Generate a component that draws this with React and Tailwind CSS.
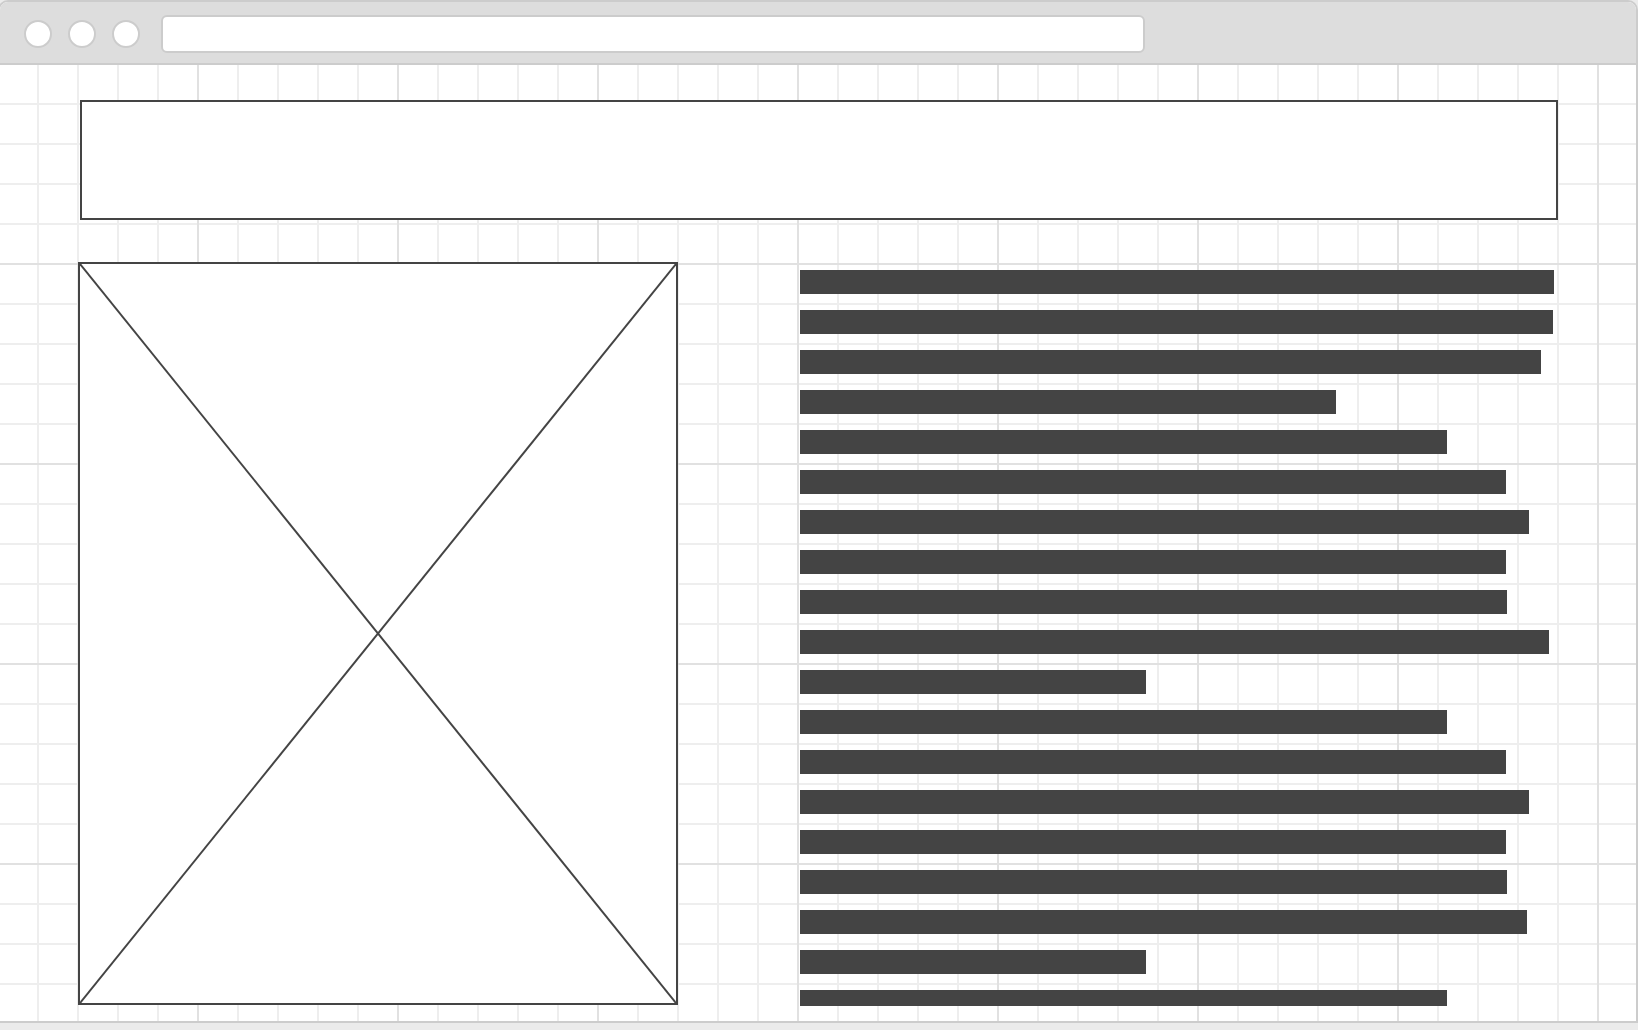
import React from "react";

const bars = [754, 753, 741, 536, 647, 706, 729, 706, 707, 749, 346, 647, 706, 729, 706, 707, 727, 346, 647];

function Dot() {
  return <div className="w-[28px] h-[28px] rounded-full bg-white border-2 border-[#cccccc]" />;
}

export default function App() {
  return (
    <div className="w-[1638px] h-[1030px] bg-[#ebebeb] overflow-hidden">
      <div className="ml-[-2px] w-[1640px] h-[1023px] border-2 border-[#cccccc] rounded-t-[10px] overflow-hidden bg-white flex flex-col">
        <div className="h-[63px] bg-[#dddddd] border-b-2 border-[#cccccc] flex items-start shrink-0">
          <div className="flex gap-[16px] ml-[24px] mt-[18px]">
            <Dot />
            <Dot />
            <Dot />
          </div>
          <div className="ml-[21px] mt-[13px] w-[984px] h-[38px] bg-white border-2 border-[#cccccc] rounded-[6px]" />
        </div>
        <div className="flex-1 pt-[35px] [background-image:linear-gradient(to_right,#e1e1e1_2px,transparent_2px),linear-gradient(to_bottom,#e1e1e1_2px,transparent_2px),linear-gradient(to_right,#eeeeee_2px,transparent_2px),linear-gradient(to_bottom,#eeeeee_2px,transparent_2px)] [background-size:200px_200px,200px_200px,40px_40px,40px_40px] [background-position:197px_0,0_198px,37px_0,0_38px]">
          <div className="ml-[80px] w-[1478px] h-[120px] border-2 border-[#444444] bg-white" />
          <div className="flex mt-[42px] ml-[78px]">
            <div className="w-[600px] h-[743px] border-2 border-[#444444] bg-white shrink-0">
              <svg width="596" height="739" viewBox="0 0 596 739" className="block">
                <line x1="0" y1="0" x2="596" y2="739" stroke="#444444" strokeWidth="2" />
                <line x1="596" y1="0" x2="0" y2="739" stroke="#444444" strokeWidth="2" />
              </svg>
            </div>
            <div className="ml-[122px] w-[760px] h-[744px] overflow-hidden pt-[8px] flex flex-col gap-[16px]">
              {bars.map((w, i) => (
                <div key={i} className="h-[24px] bg-[#444444] shrink-0" style={{ width: w }} />
              ))}
            </div>
          </div>
        </div>
      </div>
    </div>
  );
}
